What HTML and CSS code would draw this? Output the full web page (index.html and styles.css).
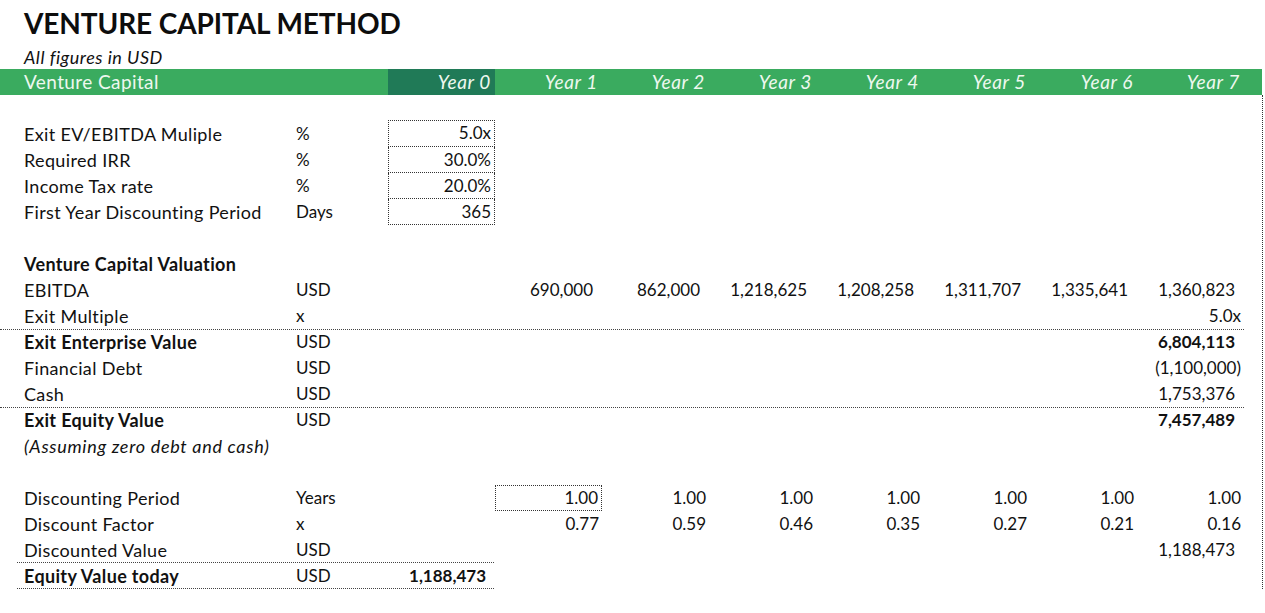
FILE: index.html
```html
<!DOCTYPE html>
<html>
<head>
<meta charset="utf-8">
<link rel="stylesheet" href="styles.css">
</head>
<body>
<div class="sheet">
  <div class="title">VENTURE CAPITAL METHOD</div>
  <div class="subtitle">All figures in USD</div>
  <div class="row head">
    <div class="lbl">Venture Capital</div>
    <div></div>
    <div class="num yr0">Year 0</div>
    <div class="num">Year 1</div>
    <div class="num">Year 2</div>
    <div class="num">Year 3</div>
    <div class="num">Year 4</div>
    <div class="num">Year 5</div>
    <div class="num">Year 6</div>
    <div class="num">Year 7</div>
  </div>
  <div class="body">
    <div class="row"></div>
    <div class="row">
      <div class="lbl">Exit EV/EBITDA Muliple</div><div>%</div>
      <div class="num input first">5.0x</div>
    </div>
    <div class="row">
      <div class="lbl">Required IRR</div><div>%</div>
      <div class="num input">30.0%</div>
    </div>
    <div class="row">
      <div class="lbl">Income Tax rate</div><div>%</div>
      <div class="num input">20.0%</div>
    </div>
    <div class="row">
      <div class="lbl">First Year Discounting Period</div><div>Days</div>
      <div class="num input">365</div>
    </div>
    <div class="row"></div>
    <div class="row">
      <div class="lbl b">Venture Capital Valuation</div>
    </div>
    <div class="row">
      <div class="lbl">EBITDA</div><div>USD</div>
      <div></div>
      <div class="num pad">690,000</div>
      <div class="num pad">862,000</div>
      <div class="num pad">1,218,625</div>
      <div class="num pad">1,208,258</div>
      <div class="num pad">1,311,707</div>
      <div class="num pad">1,335,641</div>
      <div class="num pad">1,360,823</div>
    </div>
    <div class="row line-full">
      <div class="lbl">Exit Multiple</div><div>x</div>
      <div class="c9 num">5.0x</div>
    </div>
    <div class="row">
      <div class="lbl b">Exit Enterprise Value</div><div>USD</div>
      <div class="c9 num pad b">6,804,113</div>
    </div>
    <div class="row">
      <div class="lbl">Financial Debt</div><div>USD</div>
      <div class="c9 num">(1,100,000)</div>
    </div>
    <div class="row line-full">
      <div class="lbl">Cash</div><div>USD</div>
      <div class="c9 num pad">1,753,376</div>
    </div>
    <div class="row">
      <div class="lbl b">Exit Equity Value</div><div>USD</div>
      <div class="c9 num pad b">7,457,489</div>
    </div>
    <div class="row">
      <div class="lbl i">(Assuming zero debt and cash)</div>
    </div>
    <div class="row"></div>
    <div class="row">
      <div class="lbl">Discounting Period</div><div>Years</div>
      <div></div>
      <div class="num boxed">1.00</div>
      <div class="num">1.00</div>
      <div class="num">1.00</div>
      <div class="num">1.00</div>
      <div class="num">1.00</div>
      <div class="num">1.00</div>
      <div class="num">1.00</div>
    </div>
    <div class="row">
      <div class="lbl">Discount Factor</div><div>x</div>
      <div></div>
      <div class="num">0.77</div>
      <div class="num">0.59</div>
      <div class="num">0.46</div>
      <div class="num">0.35</div>
      <div class="num">0.27</div>
      <div class="num">0.21</div>
      <div class="num">0.16</div>
    </div>
    <div class="row line-short">
      <div class="lbl">Discounted Value</div><div>USD</div>
      <div class="c9 num pad">1,188,473</div>
    </div>
    <div class="row line-short">
      <div class="lbl b">Equity Value today</div><div>USD</div>
      <div class="num pad b">1,188,473</div>
    </div>
  </div>
</div>
</body>
</html>
```

FILE: styles.css
```css
html, body {
  margin: 0;
  padding: 0;
  background: #ffffff;
}

body {
  font-family: Lato, "Open Sans", sans-serif;
  font-size: 17px;
  color: #111111;
}

.sheet {
  width: 1263px;
}

.title {
  height: 43px;
  box-sizing: border-box;
  padding: 6px 0 0 24px;
  font-size: 28px;
  font-weight: 700;
  line-height: 34px;
  color: #0d0d0d;
  letter-spacing: -0.1px;
}

.subtitle {
  height: 26px;
  box-sizing: border-box;
  padding: 2px 0 0 24px;
  font-style: italic;
  font-size: 18px;
  letter-spacing: 0.5px;
  line-height: 24px;
}

.row {
  display: grid;
  grid-template-columns: 279px 92px repeat(8, 107px);
  height: 26px;
  line-height: 26px;
  padding-left: 17px;
  width: 1227px;
}

.row > div {
  white-space: nowrap;
  box-sizing: border-box;
}

.lbl {
  padding-left: 7px;
  font-size: 18px;
  letter-spacing: 0.35px;
}

.lbl.i {
  letter-spacing: 0.7px;
}

.num {
  text-align: right;
  padding-right: 3px;
}

.num.pad {
  padding-right: 9px;
}

.b {
  font-weight: 700;
}

.i {
  font-style: italic;
}

.head {
  background: #3aab5f;
  color: #eef8ef;
  width: 1262px;
  box-sizing: border-box;
  font-style: italic;
  font-size: 19px;
  letter-spacing: 0.6px;
}

.head .lbl {
  font-style: normal;
  font-size: 19px;
  letter-spacing: 0.4px;
}

.head .num {
  padding-right: 4px;
}

.head .yr0 {
  background: #207a57;
}

.body {
  border-right: 1px dotted #333333;
  width: 1262px;
}

.c9 {
  grid-column: 10;
}

.input {
  border-left: 1px dotted #333;
  border-right: 1px dotted #333;
  border-bottom: 1px dotted #333;
  line-height: 25px;
}

.input.first {
  border-top: 1px dotted #333;
  line-height: 24px;
  margin-top: -1px;
  height: 27px;
}

.boxed {
  border: 1px dotted #333;
  line-height: 24px;
}

.line-full {
  border-bottom: 1px dotted #444;
  height: 26px;
  box-sizing: content-box;
  margin-bottom: -1px;
}

.line-short {
  position: relative;
}

.line-short::after {
  content: "";
  position: absolute;
  left: 17px;
  width: 477px;
  bottom: 0;
  border-bottom: 1px dotted #444;
}
```
